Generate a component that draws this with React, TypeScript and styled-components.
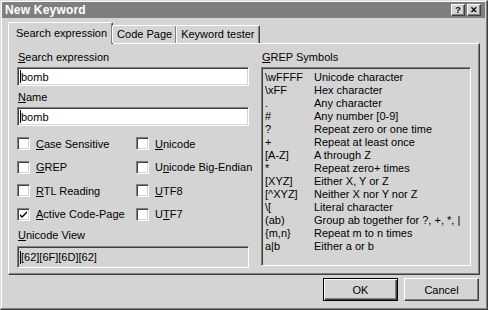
import React from "react";
import styled, { createGlobalStyle, css } from "styled-components";

const Global = createGlobalStyle`
  html, body { margin: 0; padding: 0; background: #d4d4d4; }
  body { font-family: "Liberation Sans", Arial, sans-serif; font-size: 11px; color: #000; }
`;

const Window = styled.div`
  width: 488px;
  height: 310px;
  box-sizing: border-box;
  background: #d4d4d4;
  border-top: 1px solid #dcdcdc;
  border-left: 1px solid #dcdcdc;
  border-right: 1px solid #404040;
  border-bottom: 1px solid #404040;
  box-shadow: inset -1px -1px 0 #808080, inset 1px 1px 0 #fff;
  padding: 1px 2px 2px 1px;
  display: flex;
  flex-direction: column;
`;

const TitleBar = styled.div`
  height: 16px;
  background: #7f7f7f;
  display: flex;
  align-items: center;
  padding: 0 4px 0 3px;
`;

const Title = styled.div`
  flex: 1;
  color: #fff;
  font-weight: bold;
  font-size: 12px;
  letter-spacing: 0.2px;
`;

const TitleButton = styled.div<{ $gap?: boolean }>`
  width: 14px;
  height: 12px;
  box-sizing: border-box;
  background: #d4d4d4;
  border-top: 1px solid #fff;
  border-left: 1px solid #fff;
  border-right: 1px solid #404040;
  border-bottom: 1px solid #404040;
  box-shadow: inset -1px -1px 0 #808080;
  margin-left: ${(p) => (p.$gap ? "2px" : "0")};
  display: flex;
  align-items: center;
  justify-content: center;
  font-size: 9px;
  font-weight: bold;
  line-height: 1;
  color: #000;
`;

const Body = styled.div`
  flex: 1;
  display: flex;
  flex-direction: column;
  padding: 4px 6px 0 6px;
`;

const TabRow = styled.div`
  display: flex;
  align-items: flex-end;
  height: 21px;
  position: relative;
  z-index: 1;
`;

const Tab = styled.div<{ $active?: boolean }>`
  box-sizing: border-box;
  height: 18px;
  padding: 0 4px 1px 4px;
  display: flex;
  align-items: center;
  background: #d4d4d4;
  border-top: 1px solid #fff;
  border-left: 1px solid #fff;
  border-right: 1px solid #404040;
  box-shadow: inset -1px 0 0 #808080;
  border-radius: 2px 2px 0 0;
  font-size: 11px;
  white-space: nowrap;
  ${(p) =>
    p.$active
      ? css`
          margin-bottom: -1px;
          height: 22px;
          padding: 0 5px 2px 7px;
        `
      : css`
          margin-left: -1px;
        `}
`;

const Panel = styled.div`
  box-sizing: border-box;
  height: 232px;
  width: 472px;
  background: #d4d4d4;
  border-top: 1px solid #fff;
  border-left: 1px solid #fff;
  border-right: 1px solid #404040;
  border-bottom: 1px solid #404040;
  box-shadow: inset -1px -1px 0 #808080;
  display: grid;
  grid-template-columns: 232px 210px;
  column-gap: 12px;
  padding: 6px 0 0 8px;
`;

const Column = styled.div`
  display: flex;
  flex-direction: column;
`;

const Label = styled.div<{ $top?: number }>`
  height: 15px;
  line-height: 15px;
  margin-top: ${(p) => p.$top ?? 0}px;
  margin-left: 1px;
  font-size: 11px;
  white-space: nowrap;
`;

const Sunken = styled.div<{ $ro?: boolean }>`
  box-sizing: border-box;
  border-top: 1px solid #808080;
  border-left: 1px solid #808080;
  border-right: 1px solid #fff;
  border-bottom: 1px solid #fff;
  box-shadow: inset 1px 1px 0 #404040, inset -1px -1px 0 #d4d4d4;
  background: ${(p) => (p.$ro ? "#d4d4d4" : "#fff")};
`;

const Input = styled(Sunken)`
  height: 19px;
  margin-top: 2px;
  display: flex;
  align-items: center;
  padding-left: 2px;
  font-size: 11px;
`;

const Caret = styled.span`
  display: inline-block;
  width: 1px;
  height: 13px;
  background: #000;
`;

const CheckGrid = styled.div`
  display: grid;
  grid-template-columns: 119px 1fr;
  grid-auto-rows: 23.5px;
  margin-top: 6px;
`;

const CheckItem = styled.div`
  display: flex;
  align-items: center;
  gap: 6px;
  font-size: 11px;
  white-space: nowrap;
`;

const Box = styled(Sunken)`
  width: 13px;
  height: 13px;
  flex: none;
  display: flex;
  align-items: center;
  justify-content: center;
`;

const UnicodeBox = styled(Sunken)`
  height: 22px;
  margin-top: 3px;
  display: flex;
  align-items: center;
  padding-left: 2px;
  font-size: 11px;
`;

const ListBox = styled(Sunken)`
  width: 210px;
  height: 199px;
  margin-top: 2px;
  background: #d4d4d4;
  padding: 3px 0 0 3px;
  display: grid;
  grid-template-columns: 49px 1fr;
  grid-auto-rows: 13px;
  align-content: start;
  font-size: 11px;
  line-height: 13px;
  white-space: nowrap;
`;

const Footer = styled.div`
  display: flex;
  justify-content: flex-end;
  gap: 6px;
  padding: 3px 0 0 0;
`;

const Button = styled.div<{ $default?: boolean }>`
  box-sizing: border-box;
  width: 75px;
  height: 23px;
  display: flex;
  align-items: center;
  justify-content: center;
  font-size: 11px;
  background: #d4d4d4;
  ${(p) =>
    p.$default
      ? css`
          border: 1px solid #000;
          box-shadow: inset 1px 1px 0 #fff, inset -1px -1px 0 #404040, inset -2px -2px 0 #808080;
        `
      : css`
          border-top: 1px solid #fff;
          border-left: 1px solid #fff;
          border-right: 1px solid #404040;
          border-bottom: 1px solid #404040;
          box-shadow: inset -1px -1px 0 #808080;
        `}
`;

const U = styled.span`
  text-decoration: underline;
  text-underline-offset: 1px;
`;

const Check = () => (
  <svg width="9" height="9" viewBox="0 0 9 9">
    <path d="M1 4 L3 6 L8 1 L8 3 L3 8 L1 6 Z" fill="#000" />
  </svg>
);

const lbl = (text: string, idx: number) => (
  <>
    {text.slice(0, idx)}
    <U>{text[idx]}</U>
    {text.slice(idx + 1)}
  </>
);

const checks: [string, number, boolean][] = [
  ["Case Sensitive", 0, false],
  ["Unicode", 0, false],
  ["GREP", 0, false],
  ["Unicode Big-Endian", 1, false],
  ["RTL Reading", 0, false],
  ["UTF8", 0, false],
  ["Active Code-Page", 0, true],
  ["UTF7", 1, false],
];

const symbols: [string, string][] = [
  ["\\wFFFF", "Unicode character"],
  ["\\xFF", "Hex character"],
  [".", "Any character"],
  ["#", "Any number [0-9]"],
  ["?", "Repeat zero or one time"],
  ["+", "Repeat at least once"],
  ["[A-Z]", "A through Z"],
  ["*", "Repeat zero+ times"],
  ["[XYZ]", "Either X, Y or Z"],
  ["[^XYZ]", "Neither X nor Y nor Z"],
  ["\\[", "Literal character"],
  ["(ab)", "Group ab together for ?, +, *, |"],
  ["{m,n}", "Repeat m to n times"],
  ["a|b", "Either a or b"],
];

export default function App() {
  return (
    <>
      <Global />
      <Window>
        <TitleBar>
          <Title>New Keyword</Title>
          <TitleButton>?</TitleButton>
          <TitleButton $gap>✕</TitleButton>
        </TitleBar>
        <Body>
          <TabRow>
            <Tab $active>Search expression</Tab>
            <Tab>Code Page</Tab>
            <Tab>Keyword tester</Tab>
          </TabRow>
          <Panel>
            <Column>
              <Label>{lbl("Search expression", 0)}</Label>
              <Input>
                <Caret />
                bomb
              </Input>
              <Label $top={4}>{lbl("Name", 0)}</Label>
              <Input>
                <Caret />
                bomb
              </Input>
              <CheckGrid>
                {checks.map(([t, i, c]) => (
                  <CheckItem key={t}>
                    <Box>{c && <Check />}</Box>
                    <span>{lbl(t, i)}</span>
                  </CheckItem>
                ))}
              </CheckGrid>
              <Label $top={2}>{lbl("Unicode View", 0)}</Label>
              <UnicodeBox $ro>
                <Caret />
                [62][6F][6D][62]
              </UnicodeBox>
            </Column>
            <Column>
              <Label>{lbl("GREP Symbols", 0)}</Label>
              <ListBox $ro>
                {symbols.map(([a, b]) => (
                  <React.Fragment key={a}>
                    <span>{a}</span>
                    <span>{b}</span>
                  </React.Fragment>
                ))}
              </ListBox>
            </Column>
          </Panel>
          <Footer>
            <Button $default>OK</Button>
            <Button>Cancel</Button>
          </Footer>
        </Body>
      </Window>
    </>
  );
}
